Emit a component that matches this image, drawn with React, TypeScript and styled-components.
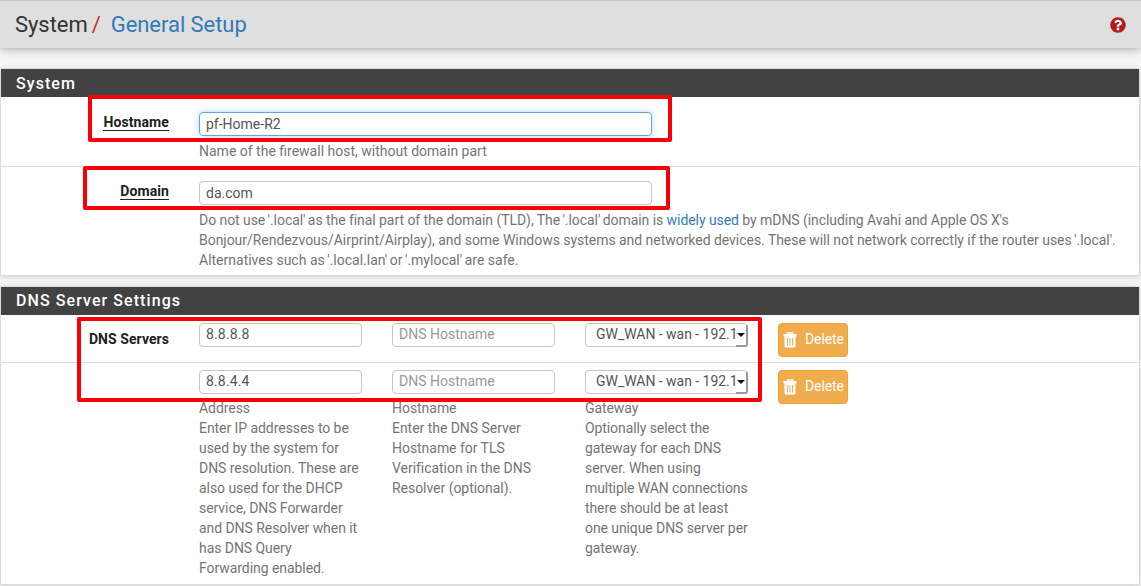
import React from 'react';
import styled, { createGlobalStyle, css } from 'styled-components';
import { FaQuestionCircle } from 'react-icons/fa';

const GlobalStyle = createGlobalStyle`
  *, *::before, *::after { box-sizing: border-box; }
  html, body { margin: 0; padding: 0; }
  body {
    background: #f5f5f5;
    color: #757575;
    font: 14px/20px Roboto, "Liberation Sans", sans-serif;
    overflow: hidden;
  }
`;

const Page = styled.div`
  position: relative;
  width: 1141px;
  height: 586px;
  overflow: hidden;
`;

const Header = styled.header`
  display: flex;
  align-items: center;
  justify-content: space-between;
  height: 48px;
  padding: 1px 15px 0 15px;
  border-top: 1px solid #c9c9c9;
  background: #dfdfdf;
  box-shadow: 0 2px 8px rgba(0, 0, 0, 0.28);
`;

const Breadcrumb = styled.h1`
  display: flex;
  margin: 0;
  font-size: 22px;
  font-weight: 400;
  line-height: 28px;
  letter-spacing: -0.05px;
  color: #333;
`;

const Slash = styled.span`
  margin: 0 10px 0 4px;
  color: #c9302c;
`;

const Link = styled.a`
  color: #337ab7;
  text-decoration: none;
`;

const HelpIcon = styled(FaQuestionCircle)`
  display: block;
  width: 16px;
  height: 16px;
  color: #b71c1c;
  background: radial-gradient(#fff 50%, transparent 51%);
`;

const Panel = styled.section<{ $gap: number; $height: number }>`
  margin: ${(p) => p.$gap}px 2px 0 1px;
  height: ${(p) => p.$height}px;
  background: #fff;
  box-shadow: 0 0 0 1px #dcdcdc, 0 1px 6px rgba(0, 0, 0, 0.2);
`;

const PanelTitle = styled.h2<{ $drop?: number }>`
  margin: 0;
  height: 28px;
  padding: ${(p) => p.$drop ?? 0}px 0 0 15px;
  background: #424242;
  color: #fff;
  font-size: 16px;
  font-weight: 500;
  line-height: 28px;
  letter-spacing: 1.07px;
`;

const Row = styled.div<{ $height: number; $top: number; $line?: boolean }>`
  display: flex;
  height: ${(p) => p.$height}px;
  padding-top: ${(p) => p.$top}px;
  ${(p) => p.$line && css`border-bottom: 1px solid #dcdcdc;`}
`;

const LabelCell = styled.div<{ $drop?: number }>`
  flex: 0 0 168px;
  padding-top: ${(p) => p.$drop ?? 0}px;
  text-align: right;
`;

const Label = styled.label<{ $underline?: boolean }>`
  display: inline-block;
  color: #212121;
  font-weight: 700;
  line-height: 18px;
  letter-spacing: 0.06px;
  ${(p) => p.$underline && css`
    height: 17px;
    line-height: 17px;
    letter-spacing: 0.1px;
    border-bottom: 1px solid #212121;
  `}
`;

const Field = styled.div`
  flex: 1;
  margin-left: 30px;
`;

const control = css`
  display: block;
  width: 100%;
  height: 24px;
  border: 1px solid #c6c6c6;
  border-radius: 4px;
  background: #fff;
  color: #555;
  font: 14px/20px Roboto, "Liberation Sans", sans-serif;
`;

const Input = styled.input<{ $wide?: boolean; $active?: boolean; $spaced?: boolean }>`
  ${control}
  padding: ${(p) => (p.$wide ? '0 6px' : '0 6px 2px')};
  outline: none;
  ${(p) => p.$wide && css`width: 453px;`}
  ${(p) => p.$spaced && css`letter-spacing: 0.15px;`}
  ${(p) => p.$active && css`
    border-color: #66a5dc;
    box-shadow: 0 0 7px rgba(102, 175, 233, 0.5);
  `}
  &::placeholder { color: #999; opacity: 1; }
`;

const Help = styled.p<{ $top: number; $spacing?: number }>`
  margin: ${(p) => p.$top}px 0 0;
  white-space: pre;
  letter-spacing: ${(p) => p.$spacing ?? 0}px;
`;

const Line = styled.span<{ $spacing: number }>`
  display: block;
  white-space: nowrap;
  letter-spacing: ${(p) => p.$spacing}px;
`;

const Quoted = styled.span<{ $last?: boolean }>`
  margin: 0 ${(p) => (p.$last ? 0 : -1)}px 0 -1px;
`;

const Column = styled.div`
  flex: 0 0 163px;
  min-width: 0;
  margin-left: 30px;
  white-space: nowrap;
`;

const Select = styled.div`
  ${control}
  display: flex;
  padding-left: 10px;
  line-height: 21px;
  letter-spacing: -0.03px;
`;

const Arrow = styled.span`
  flex: none;
  display: flex;
  align-items: center;
  justify-content: center;
  width: 12px;
  height: 22px;
  margin: 1px 0 0 -2px;
  border-right: 2px solid #999;
  border-bottom: 2px solid #999;
  border-radius: 0 1px 3px 0;
  &::before {
    content: '';
    border: 4px solid transparent;
    border-top: 4px solid #111;
    border-bottom: 0;
  }
`;

const DeleteButton = styled.button`
  display: flex;
  flex: none;
  align-items: center;
  gap: 8px;
  width: 70px;
  height: 34px;
  margin-left: 30px;
  padding: 0 0 2px 4px;
  border: 1px solid #eea236;
  border-radius: 4px;
  background: #f0ad4e;
  color: #fff;
  font: 14px/20px Roboto, "Liberation Sans", sans-serif;
  letter-spacing: -0.1px;
  svg { flex: none; margin-top: 1px; }
`;

const Mark = styled.div<{ $x: number; $y: number; $w: number; $h: number }>`
  position: absolute;
  left: ${(p) => p.$x}px;
  top: ${(p) => p.$y}px;
  width: ${(p) => p.$w}px;
  height: ${(p) => p.$h}px;
  border: 4px solid #f90008;
  border-radius: 2px;
  pointer-events: none;
`;

const Trash = () => (
  <svg width="14" height="16" viewBox="0 0 14 16" fill="none">
    <path d="M4.5 2.6V1h5v1.6" stroke="#fff" strokeWidth="1.6" />
    <path d="M.5 2h13v2.4H.5zM1.5 4.4h11v10q0 1.1-1.1 1.1H2.6q-1.1 0-1.1-1.1z" fill="#fff" />
    <path d="M4.5 6v7.5M7 6v7.5M9.5 6v7.5" stroke="#f0ad4e" strokeWidth="1" />
  </svg>
);

const servers = [
  { address: '8.8.8.8', label: 'DNS Servers' },
  { address: '8.8.4.4', label: '' },
];

const columnHelp = [
  'Address\nEnter IP addresses to be\nused by the system for\nDNS resolution. These are\nalso used for the DHCP\nservice, DNS Forwarder\nand DNS Resolver when it\nhas DNS Query\nForwarding enabled.',
  'Hostname\nEnter the DNS Server\nHostname for TLS\nVerification in the DNS\nResolver (optional).',
  'Gateway\nOptionally select the\ngateway for each DNS\nserver. When using\nmultiple WAN connections\nthere should be at least\none unique DNS server per\ngateway.',
];

export default function App() {
  return (
    <Page>
      <GlobalStyle />
      <Header>
        <Breadcrumb>
          System<Slash>/</Slash><Link>General Setup</Link>
        </Breadcrumb>
        <HelpIcon />
      </Header>

      <Panel $gap={21} $height={206}>
        <PanelTitle $drop={1}>System</PanelTitle>
        <Row $height={70} $top={15} $line>
          <LabelCell><Label $underline>Hostname</Label></LabelCell>
          <Field>
            <Input $wide $active defaultValue="pf-Home-R2" />
            <Help $top={5}>Name of the firewall host, without domain part</Help>
          </Field>
        </Row>
        <Row $height={108} $top={14}>
          <LabelCell><Label $underline>Domain</Label></LabelCell>
          <Field>
            <Input $wide defaultValue="da.com" />
            <Help $top={5}>
              <Line $spacing={-0.06}>
                Do not use <Quoted>'.local'</Quoted> as the final part of the domain (TLD), The <Quoted>'.local'</Quoted> domain is <Link>widely used</Link> by mDNS (including Avahi and Apple OS X's
              </Line>
              <Line $spacing={-0.038}>
                Bonjour/Rendezvous/Airprint/Airplay), and some Windows systems and networked devices. These will not network correctly if the router uses <Quoted $last>'.local'.</Quoted>
              </Line>
              <Line $spacing={0}>
                Alternatives such as <Quoted>'.local.lan'</Quoted> or <Quoted>'.mylocal'</Quoted> are safe.
              </Line>
            </Help>
          </Field>
        </Row>
      </Panel>

      <Panel $gap={12} $height={297}>
        <PanelTitle>DNS Server Settings</PanelTitle>
        {servers.map((server, i) => (
          <Row key={server.address} $height={i ? 221 : 48} $top={i ? 7 : 8} $line={i === 0}>
            <LabelCell $drop={6}><Label>{server.label}</Label></LabelCell>
            <Column>
              <Input $spaced defaultValue={server.address} />
              {i === 1 && <Help $top={4} $spacing={-0.06}>{columnHelp[0]}</Help>}
            </Column>
            <Column>
              <Input placeholder="DNS Hostname" />
              {i === 1 && <Help $top={4} $spacing={-0.04}>{columnHelp[1]}</Help>}
            </Column>
            <Column>
              <Select>GW_WAN - wan - 192.1<Arrow /></Select>
              {i === 1 && <Help $top={4} $spacing={-0.09}>{columnHelp[2]}</Help>}
            </Column>
            <DeleteButton><Trash />Delete</DeleteButton>
          </Row>
        ))}
      </Panel>

      <Mark $x={88} $y={95} $w={584} $h={47} />
      <Mark $x={83} $y={166} $w={587} $h={44} />
      <Mark $x={77} $y={317} $w={685} $h={85} />
    </Page>
  );
}
